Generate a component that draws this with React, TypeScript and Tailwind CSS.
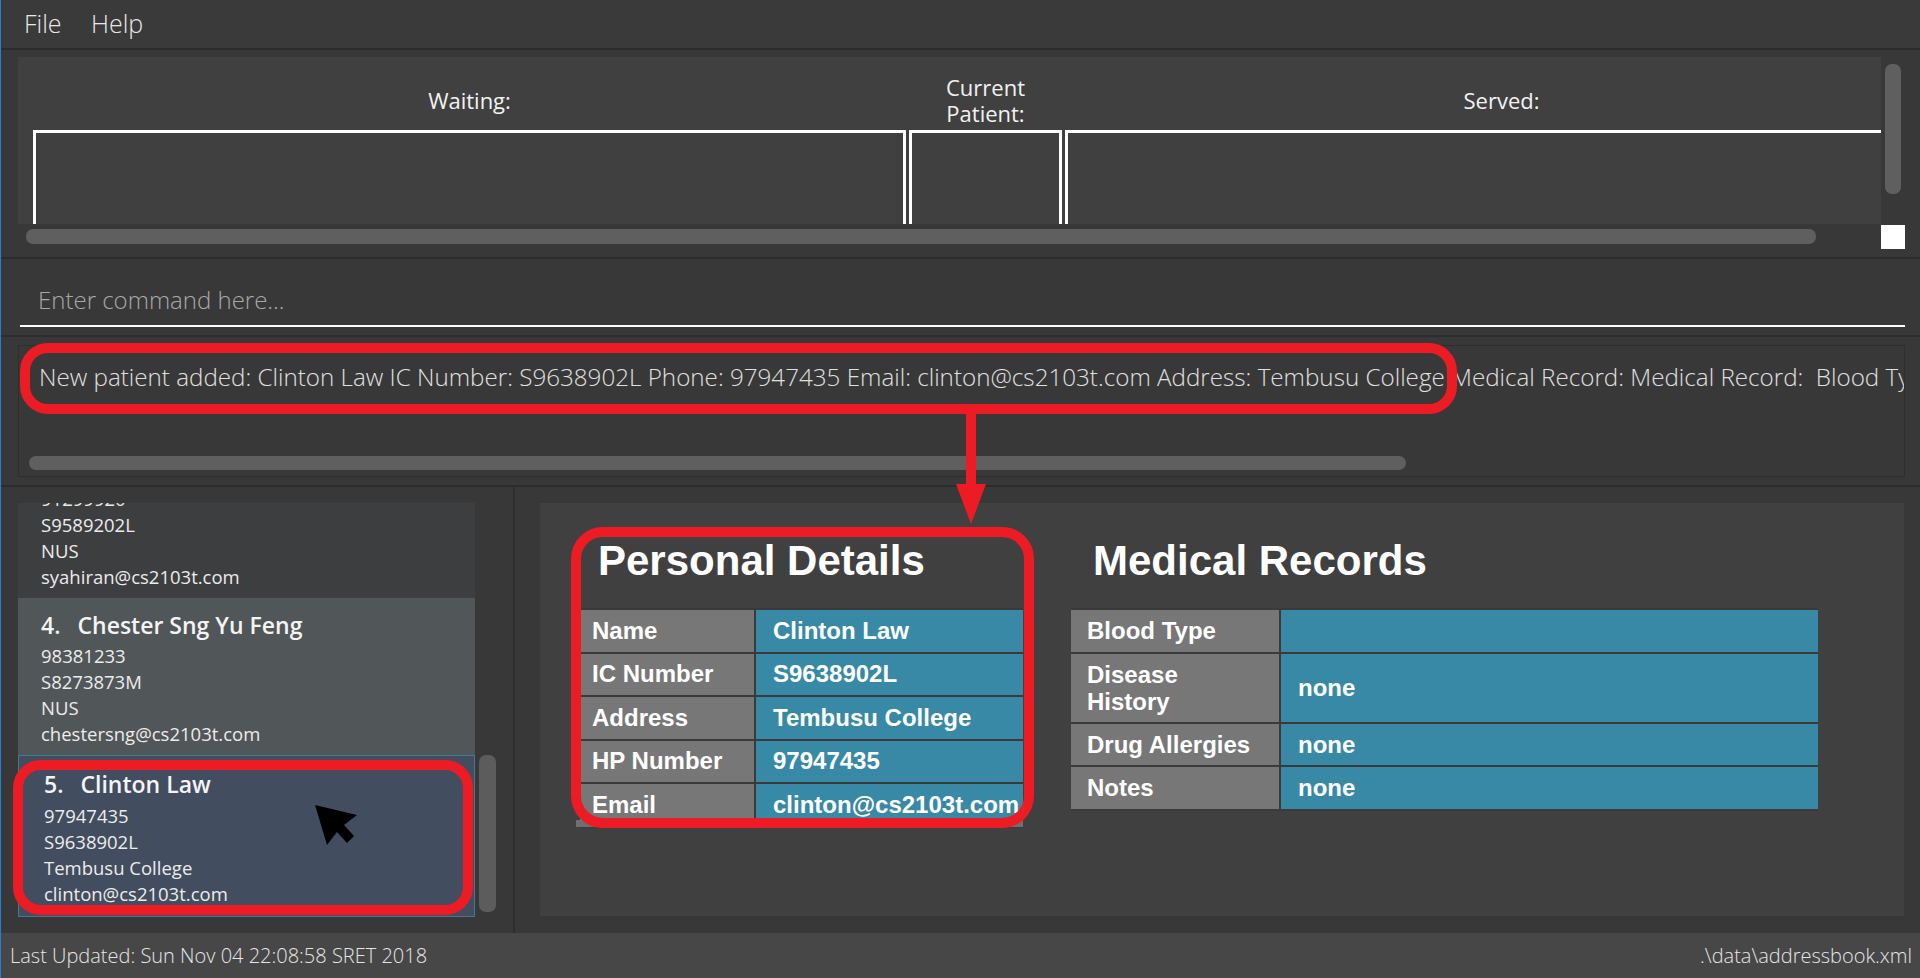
import React from "react";

type Person = { idx: number; name: string; lines: string[] };

const PEOPLE: Person[] = [
  { idx: 3, name: "Syahiran Rafi", lines: ["91299920", "S9589202L", "NUS", "syahiran@cs2103t.com"] },
  { idx: 4, name: "Chester Sng Yu Feng", lines: ["98381233", "S8273873M", "NUS", "chestersng@cs2103t.com"] },
  { idx: 5, name: "Clinton Law", lines: ["97947435", "S9638902L", "Tembusu College", "clinton@cs2103t.com"] },
];

const PERSONAL = [
  ["Name", "Clinton Law"],
  ["IC Number", "S9638902L"],
  ["Address", "Tembusu College"],
  ["HP Number", "97947435"],
  ["Email", "clinton@cs2103t.com"],
];

const MEDICAL = [
  ["Blood Type", "", "h-[43.5px]"],
  ["Disease History", "none", "h-[70px]"],
  ["Drug Allergies", "none", "h-[43.5px]"],
  ["Notes", "none", "h-[43.5px]"],
];

function QueueColumn({ width, children }: { width: string; children: React.ReactNode }) {
  return (
    <div className={`${width} shrink-0 flex flex-col`}>
      <div className="h-[73px] pt-[12px] flex items-center justify-center text-center text-[22px] leading-[26px] text-[#f2f2f2]">
        {children}
      </div>
      <div className="flex-1 border-t-[3px] border-x-[3px] border-white" />
    </div>
  );
}

function PersonCard({ p, variant, className = "" }: { p: Person; variant: "even" | "odd" | "selected"; className?: string }) {
  const look =
    variant === "even"
      ? "bg-[#3c3e3f] pl-[23px] pt-[12px] pb-[8px] gap-[3px]"
      : variant === "odd"
      ? "bg-[#515658] pl-[23px] pt-[12px] pb-[8px] gap-[3px]"
      : "bg-[#424d5f] border border-[#3e7b91] pl-[25px] pt-[13px] pb-[9px] gap-[4px]";
  return (
    <div className={`shrink-0 flex flex-col ${look} ${className}`}>
      <div className="text-[23px] leading-[30px] font-semibold text-[#f4f4f4] whitespace-nowrap">
        {p.idx}.<span className="ml-[17px]">{p.name}</span>
      </div>
      <div className="flex flex-col text-[18.5px] leading-[26px] text-[#ececec]">
        {p.lines.map((l) => (
          <div key={l}>{l}</div>
        ))}
      </div>
    </div>
  );
}

export default function App() {
  return (
    <div className="relative w-[1920px] h-[978px] overflow-hidden bg-[#383838] flex flex-col text-white font-['Open_Sans',sans-serif]">
      {/* menu bar */}
      <div className="h-[50px] shrink-0 flex items-center bg-[#3a3a3a] border-b-2 border-[#2c2c2c] text-[25px] font-light text-[#e8e8e8]">
        <span className="ml-[24px] w-[67px]">File</span>
        <span>Help</span>
      </div>

      {/* queue */}
      <div className="h-[207px] shrink-0 flex items-start pt-[7px] pl-[18px]">
        <div className="w-[1863px] flex flex-col">
          <div className="h-[167px] bg-[#404040] overflow-hidden flex gap-[3px] pl-[15px]">
            <QueueColumn width="w-[873px]">Waiting:</QueueColumn>
            <QueueColumn width="w-[153px]">
              Current
              <br />
              Patient:
            </QueueColumn>
            <QueueColumn width="w-[873px]">Served:</QueueColumn>
          </div>
          <div className="h-[25px] pt-[5px] pl-[8px]">
            <div className="w-[1790px] h-[15px] rounded-[7px] bg-[#5f5f5f]" />
          </div>
        </div>
        <div className="w-[24px] h-[192px] flex flex-col">
          <div className="ml-[4px] mt-[7px] w-[16px] h-[130px] rounded-[7px] bg-[#5f5f5f]" />
          <div className="flex-1" />
          <div className="w-[24px] h-[24px] bg-white" />
        </div>
      </div>

      {/* command box */}
      <div className="h-[78px] shrink-0 border-t-2 border-[#2c2c2c] pt-[19px] pl-[20px] pr-[15px]">
        <div className="h-[49px] border-b-2 border-white flex items-center pl-[18px] pb-[4px] text-[24px] font-light text-[#a8a8a8]">
          Enter command here...
        </div>
      </div>

      {/* result display */}
      <div className="h-[150px] shrink-0 border-t-2 border-[#2c2c2c] pt-[8px] pl-[18px] pr-[15px]">
        <div className="h-[132px] border border-[#2e2e2e] flex flex-col overflow-hidden">
          <div className="pt-[16px] pl-[20px] text-[24.2px] leading-[30px] font-light whitespace-pre text-[#e0e0e0]">
            {"New patient added: Clinton Law IC Number: S9638902L Phone: 97947435 Email: clinton@cs2103t.com Address: Tembusu College Medical Record: Medical Record:  Blood Type:  Disease History: none"}
          </div>
          <div className="mt-auto mb-[6px] ml-[10px] w-[1377px] h-[14px] rounded-[7px] bg-[#5f5f5f]" />
        </div>
      </div>

      {/* lower: list + details */}
      <div className="flex-1 min-h-0 flex border-t-2 border-[#2c2c2c]">
        <div className="w-[515px] shrink-0 border-r-2 border-[#2e2e2e] pt-[16px] pl-[18px] flex items-start">
          <div className="w-[457px] h-[414px] overflow-hidden flex flex-col">
            <PersonCard p={PEOPLE[0]} variant="even" className="-mt-[62px]" />
            <PersonCard p={PEOPLE[1]} variant="odd" />
            <PersonCard p={PEOPLE[2]} variant="selected" />
          </div>
          <div className="w-[25px] pl-[4px] pt-[252px]">
            <div className="w-[17px] h-[157px] rounded-[7px] bg-[#5c5c5c]" />
          </div>
        </div>

        <div className="flex-1 pt-[16px] pl-[25px] pr-[16px]">
          <div className="h-[413px] bg-[#404040] flex items-start pl-[40px] pt-[34px] gap-[48px] font-['Liberation_Sans',Arial,sans-serif] text-white">
            {/* personal details */}
            <div className="w-[443px] shrink-0 flex flex-col">
              <div className="pl-[18px] text-[42px] leading-[48px] font-bold">Personal Details</div>
              <div className="mt-[23px] border-t-2 border-[#3a3a3a] flex flex-col">
                {PERSONAL.map(([k, v]) => (
                  <div key={k} className="h-[43.5px] flex border-b-2 border-[#3a3a3a] text-[24px] font-bold">
                    <div className="w-[176px] shrink-0 bg-[#777777] border-r-2 border-[#3a3a3a] pl-[12px] flex items-center">{k}</div>
                    <div className="flex-1 bg-[#3889a5] pl-[17px] flex items-center whitespace-nowrap">{v}</div>
                  </div>
                ))}
              </div>
              <div className="-mt-[8px] -ml-[4px] w-[447px] h-[7px] bg-[#6f6f6f]" />
            </div>

            {/* medical records */}
            <div className="w-[747px] shrink-0 flex flex-col">
              <div className="pl-[22px] text-[42px] leading-[48px] font-bold">Medical Records</div>
              <div className="mt-[23px] border-t-2 border-[#3a3a3a] flex flex-col">
                {MEDICAL.map(([k, v, h]) => (
                  <div key={k} className={`${h} flex border-b-2 border-[#3a3a3a] text-[24px] leading-[27px] font-bold`}>
                    <div className="w-[210px] shrink-0 bg-[#777777] border-r-2 border-[#3a3a3a] pl-[16px] pr-[12px] flex items-center">{k}</div>
                    <div className="flex-1 bg-[#3889a5] pl-[17px] flex items-center">{v}</div>
                  </div>
                ))}
              </div>
            </div>
          </div>
        </div>
      </div>

      {/* status bar */}
      <div className="h-[45px] shrink-0 bg-[#474747] flex items-center justify-between pl-[10px] pr-[8px] text-[20px] font-light text-[#e6e6e6]">
        <span>Last Updated: Sun Nov 04 22:08:58 SRET 2018</span>
        <span>.\data\addressbook.xml</span>
      </div>

      {/* window edge */}
      <div className="absolute left-0 top-0 w-px h-full bg-[#2b7cd3]" />

      {/* annotations */}
      <div className="absolute left-[20px] top-[343px] w-[1437px] h-[71px] border-[10px] border-[#ed1c24] rounded-[28px]" />
      <div className="absolute left-[571px] top-[527px] w-[463px] h-[301px] border-[10px] border-[#ed1c24] rounded-[32px]" />
      <div className="absolute left-[13px] top-[760px] w-[460px] h-[155px] border-[10px] border-[#ed1c24] rounded-[28px]" />
      <svg className="absolute left-[950px] top-[410px]" width="42" height="116" viewBox="0 0 42 116">
        <rect x="16" y="0" width="10" height="78" fill="#ed1c24" />
        <polygon points="6,74 36,74 21,114" fill="#ed1c24" />
      </svg>

      {/* mouse pointer */}
      <svg className="absolute left-[313px] top-[803px]" width="48" height="46" viewBox="0 0 48 46">
        <polygon points="2,2 44,12 31,22 41,33 34,40 24,29 14,42" fill="#000" />
      </svg>
    </div>
  );
}
